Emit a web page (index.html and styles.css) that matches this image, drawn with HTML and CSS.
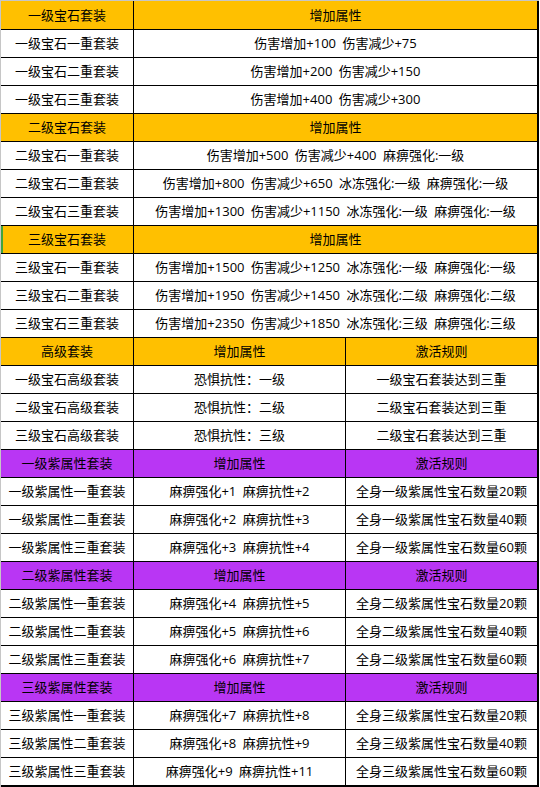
FILE: index.html
```html
<!DOCTYPE html>
<html lang="zh-CN">
<head>
<meta charset="utf-8">
<title>宝石套装</title>
<link rel="stylesheet" href="styles.css">
</head>
<body>
<div class="sheet">
  <div class="c y">一级宝石套装</div><div class="c y wide">增加属性</div>
  <div class="c">一级宝石一重套装</div><div class="c wide">伤害增加+100 伤害减少+75</div>
  <div class="c">一级宝石二重套装</div><div class="c wide">伤害增加+200 伤害减少+150</div>
  <div class="c">一级宝石三重套装</div><div class="c wide">伤害增加+400 伤害减少+300</div>

  <div class="c y">二级宝石套装</div><div class="c y wide">增加属性</div>
  <div class="c">二级宝石一重套装</div><div class="c wide">伤害增加+500 伤害减少+400 麻痹强化:一级</div>
  <div class="c">二级宝石二重套装</div><div class="c wide">伤害增加+800 伤害减少+650 冰冻强化:一级 麻痹强化:一级</div>
  <div class="c">二级宝石三重套装</div><div class="c wide">伤害增加+1300 伤害减少+1150 冰冻强化:一级 麻痹强化:一级</div>

  <div class="c y sel">三级宝石套装</div><div class="c y wide">增加属性</div>
  <div class="c">三级宝石一重套装</div><div class="c wide">伤害增加+1500 伤害减少+1250 冰冻强化:一级 麻痹强化:一级</div>
  <div class="c">三级宝石二重套装</div><div class="c wide">伤害增加+1950 伤害减少+1450 冰冻强化:二级 麻痹强化:二级</div>
  <div class="c">三级宝石三重套装</div><div class="c wide">伤害增加+2350 伤害减少+1850 冰冻强化:三级 麻痹强化:三级</div>

  <div class="c y">高级套装</div><div class="c y">增加属性</div><div class="c y end">激活规则</div>
  <div class="c">一级宝石高级套装</div><div class="c">恐惧抗性：一级</div><div class="c end">一级宝石套装达到三重</div>
  <div class="c">二级宝石高级套装</div><div class="c">恐惧抗性：二级</div><div class="c end">二级宝石套装达到三重</div>
  <div class="c">三级宝石高级套装</div><div class="c">恐惧抗性：三级</div><div class="c end">二级宝石套装达到三重</div>

  <div class="c p">一级紫属性套装</div><div class="c p">增加属性</div><div class="c p end">激活规则</div>
  <div class="c">一级紫属性一重套装</div><div class="c">麻痹强化+1 麻痹抗性+2</div><div class="c end">全身一级紫属性宝石数量20颗</div>
  <div class="c">一级紫属性二重套装</div><div class="c">麻痹强化+2 麻痹抗性+3</div><div class="c end">全身一级紫属性宝石数量40颗</div>
  <div class="c">一级紫属性三重套装</div><div class="c">麻痹强化+3 麻痹抗性+4</div><div class="c end">全身一级紫属性宝石数量60颗</div>

  <div class="c p">二级紫属性套装</div><div class="c p">增加属性</div><div class="c p end">激活规则</div>
  <div class="c">二级紫属性一重套装</div><div class="c">麻痹强化+4 麻痹抗性+5</div><div class="c end">全身二级紫属性宝石数量20颗</div>
  <div class="c">二级紫属性二重套装</div><div class="c">麻痹强化+5 麻痹抗性+6</div><div class="c end">全身二级紫属性宝石数量40颗</div>
  <div class="c">二级紫属性三重套装</div><div class="c">麻痹强化+6 麻痹抗性+7</div><div class="c end">全身二级紫属性宝石数量60颗</div>

  <div class="c p">三级紫属性套装</div><div class="c p">增加属性</div><div class="c p end">激活规则</div>
  <div class="c">三级紫属性一重套装</div><div class="c">麻痹强化+7 麻痹抗性+8</div><div class="c end">全身三级紫属性宝石数量20颗</div>
  <div class="c">三级紫属性二重套装</div><div class="c">麻痹强化+8 麻痹抗性+9</div><div class="c end">全身三级紫属性宝石数量40颗</div>
  <div class="c last">三级紫属性三重套装</div><div class="c last">麻痹强化+9 麻痹抗性+11</div><div class="c end last">全身三级紫属性宝石数量60颗</div>
</div>
</body>
</html>
```

FILE: styles.css
```css
html, body {
  margin: 0;
  padding: 0;
  background: #ffffff;
}

.sheet {
  width: 539px;
  box-sizing: border-box;
  display: grid;
  grid-template-columns: 133px 212px 193px;
  grid-template-rows: 29px repeat(26, 28px) 29px;
  border-top: 1px solid #c6c6c6;
  border-left: 1px solid #c6c6c6;
  font-family: "Open Sans", "Noto Sans CJK SC", sans-serif;
  font-size: 13px;
  color: #000;
}

.c {
  box-sizing: border-box;
  display: flex;
  align-items: center;
  justify-content: center;
  white-space: nowrap;
  border-right: 1px solid #000;
  border-bottom: 1px solid #000;
  background: #fff;
  line-height: 1;
  word-spacing: 3px;
}

.wide {
  grid-column: span 2;
  border-right-width: 2px;
}

.end {
  border-right-width: 2px;
}

.last {
  border-bottom-width: 2px;
}

.y {
  background: #ffc000;
}

.p {
  background: #b936f4;
}

.sel {
  box-shadow: inset 2px 0 0 #3fa33f;
}
```
